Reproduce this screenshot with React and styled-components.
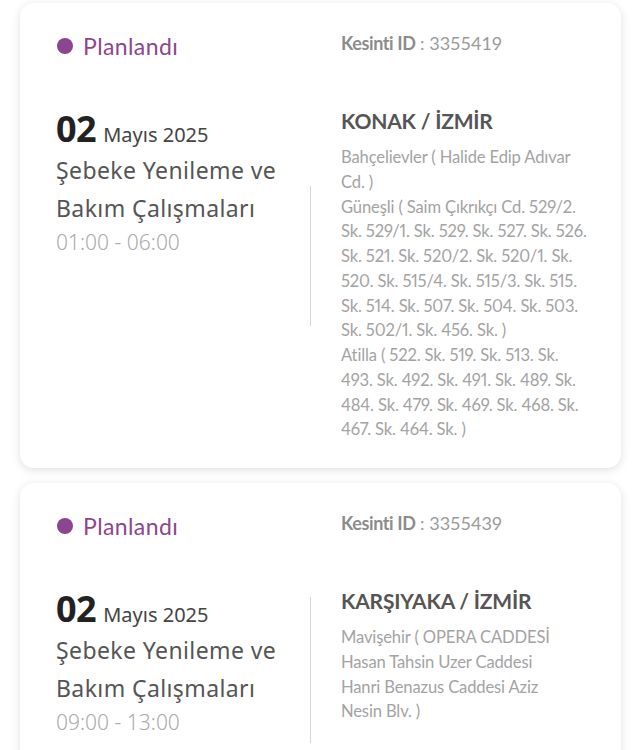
import React from 'react';
import styled, { createGlobalStyle } from 'styled-components';

const GlobalStyle = createGlobalStyle`
  * { box-sizing: border-box; }
  body {
    margin: 0;
    background: #ffffff;
    font-family: "Lato", "Noto Sans", sans-serif;
  }
`;

const outages = [
  {
    id: '3355419',
    day: '02',
    month: 'Mayıs 2025',
    title: ['Şebeke Yenileme ve', 'Bakım Çalışmaları'],
    time: '01:00 - 06:00',
    district: 'KONAK / İZMİR',
    divider: { top: 77, height: 140 },
    areas: [
      ['Bahçelievler ( Halide Edip Adıvar', 'Cd. )'],
      [
        'Güneşli ( Saim Çıkrıkçı Cd. 529/2.',
        'Sk. 529/1. Sk. 529. Sk. 527. Sk. 526.',
        'Sk. 521. Sk. 520/2. Sk. 520/1. Sk.',
        '520. Sk. 515/4. Sk. 515/3. Sk. 515.',
        'Sk. 514. Sk. 507. Sk. 504. Sk. 503.',
        'Sk. 502/1. Sk. 456. Sk. )',
      ],
      [
        'Atilla ( 522. Sk. 519. Sk. 513. Sk.',
        '493. Sk. 492. Sk. 491. Sk. 489. Sk.',
        '484. Sk. 479. Sk. 469. Sk. 468. Sk.',
        '467. Sk. 464. Sk. )',
      ],
    ],
  },
  {
    id: '3355439',
    day: '02',
    month: 'Mayıs 2025',
    title: ['Şebeke Yenileme ve', 'Bakım Çalışmaları'],
    time: '09:00 - 13:00',
    district: 'KARŞIYAKA / İZMİR',
    divider: { top: 8, height: 146 },
    areas: [
      [
        'Mavişehir ( OPERA CADDESİ',
        'Hasan Tahsin Uzer Caddesi',
        'Hanri Benazus Caddesi Aziz',
        'Nesin Blv. )',
      ],
    ],
  },
];

const Page = styled.div`
  padding: 3px 15px 0 20px;
  display: flex;
  flex-direction: column;
  gap: 15px;
`;

const Card = styled.div`
  background: #fff;
  border-radius: 14px;
  box-shadow: 0 2px 10px rgba(0, 0, 0, 0.13);
  padding: 30px 36px 26px;
`;

const Header = styled.div`
  display: grid;
  grid-template-columns: 285px 1fr;
  height: 26px;
  align-items: center;
`;

const Status = styled.div`
  display: flex;
  align-items: center;
  gap: 10px;
  color: #8b468f;
  font-size: 23px;
  letter-spacing: 0.4px;
  padding-left: 1px;
  margin-top: -1px;
`;

const Dot = styled.span`
  width: 16px;
  height: 16px;
  border-radius: 50%;
  background: #8b468f;
`;

const OutageId = styled.div`
  font-size: 18px;
  color: #9b9b9b;
  margin-top: -7px;
  b {
    color: #8c8c8c;
    font-weight: 700;
    letter-spacing: -0.4px;
  }
`;

const Body = styled.div`
  display: grid;
  grid-template-columns: 254px 1px 1fr;
  margin-top: 50px;
`;

const Left = styled.div`
  font-family: "Noto Sans", "Open Sans", sans-serif;
`;

const DateLine = styled.div`
  line-height: 40px;
  color: #444;
  white-space: nowrap;
`;

const Day = styled.span`
  font-size: 36px;
  font-weight: 700;
  color: #222;
  letter-spacing: -0.5px;
  margin-right: 7px;
`;

const Month = styled.span`
  font-size: 20px;
`;

const Title = styled.div`
  margin-top: -5px;
  font-size: 23px;
  line-height: 38px;
  color: #555;
  letter-spacing: 0.4px;
`;

const Time = styled.div`
  font-size: 21px;
  line-height: 30px;
  color: #ababab;
  font-weight: 300;
`;

const Divider = styled.div`
  width: 1px;
  background: #d6d6d6;
  align-self: start;
  margin-top: ${(p) => p.$top}px;
  height: ${(p) => p.$height}px;
`;

const Right = styled.div`
  padding-left: 30px;
`;

const District = styled.div`
  font-size: 21px;
  line-height: 28px;
  font-weight: 700;
  color: #555;
  letter-spacing: -0.2px;
  margin-top: -2px;
`;

const Areas = styled.div`
  margin-top: 10px;
  font-size: 16.6px;
  line-height: 24.75px;
  color: #a3a3a3;
  letter-spacing: -0.15px;
  font-variant-numeric: proportional-nums;
`;

const Line = styled.span`
  display: block;
  white-space: nowrap;
`;

function OutageCard({ item }) {
  return (
    <Card>
      <Header>
        <Status>
          <Dot />
          Planlandı
        </Status>
        <OutageId>
          <b>Kesinti ID</b> : {item.id}
        </OutageId>
      </Header>
      <Body>
        <Left>
          <DateLine>
            <Day>{item.day}</Day>
            <Month>{item.month}</Month>
          </DateLine>
          <Title>
            {item.title.map((t) => (
              <Line key={t}>{t}</Line>
            ))}
          </Title>
          <Time>{item.time}</Time>
        </Left>
        <Divider $top={item.divider.top} $height={item.divider.height} />
        <Right>
          <District>{item.district}</District>
          <Areas>
            {item.areas.map((area, i) => (
              <div key={i}>
                {area.map((l) => (
                  <Line key={l}>{l}</Line>
                ))}
              </div>
            ))}
          </Areas>
        </Right>
      </Body>
    </Card>
  );
}

export default function App() {
  return (
    <>
      <GlobalStyle />
      <Page>
        {outages.map((o) => (
          <OutageCard key={o.id} item={o} />
        ))}
      </Page>
    </>
  );
}
